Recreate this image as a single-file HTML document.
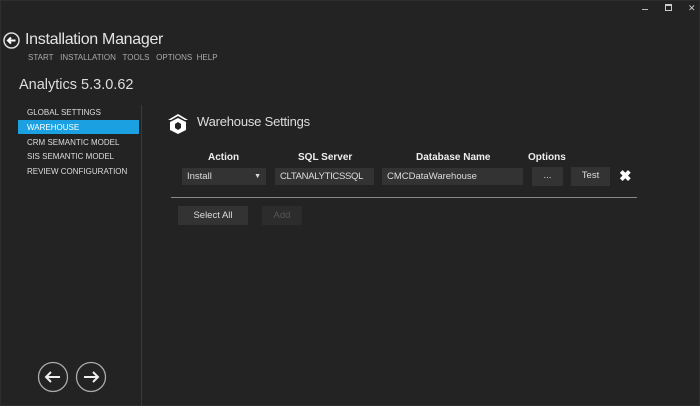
<!DOCTYPE html>
<html><head><style>
body{margin:0;width:700px;height:406px;background:#232323;font-family:"Liberation Sans",sans-serif;color:#e8e8e8;position:relative;overflow:hidden}
.a{position:absolute}
.f{position:absolute;background:#333;color:#ddd;font-size:9.5px;line-height:18px;padding-left:5px;box-sizing:border-box;white-space:nowrap}
.h{position:absolute;font-size:10px;font-weight:bold;color:#eee}
.m{font-size:8px;color:#aaa}
.s{position:absolute;left:27px;font-size:8px;color:#ddd}
</style></head><body>
<div class="a" style="left:0;top:0;width:698px;height:404px;border:1px solid #2e2e2e"></div>
<div class="a" style="left:642px;top:9px;width:6px;height:1px;background:#bbb"></div>
<div class="a" style="left:665px;top:4px;width:5px;height:4px;border:1px solid #ccc;border-top-width:2px"></div>
<div class="a" style="left:688px;top:3px;font-size:9px;color:#ccc">✕</div>
<svg class="a" style="left:3px;top:32px" width="17" height="17"><circle cx="8.5" cy="8.5" r="7.5" fill="none" stroke="#ddd" stroke-width="1.5"/><path d="M12.5 8.5H5M8 5.5L5 8.5L8 11.5" fill="none" stroke="#fff" stroke-width="2"/></svg>
<div class="a" style="left:25px;top:31px;font-size:16px;letter-spacing:-0.3px;color:#e4e4e4">Installation Manager</div>
<div class="a m" style="left:28px;top:53px">START&nbsp;&nbsp;&nbsp;INSTALLATION&nbsp;&nbsp;&nbsp;TOOLS&nbsp;&nbsp;&nbsp;OPTIONS&nbsp;&nbsp;HELP</div>
<div class="a" style="left:19px;top:77px;font-size:14.5px;color:#ddd">Analytics 5.3.0.62</div>
<div class="a" style="left:141px;top:105px;width:1px;height:301px;background:#3a3a3a"></div>
<div class="s" style="top:108px">GLOBAL SETTINGS</div>
<div class="a" style="left:18px;top:120px;width:121px;height:14px;background:#1ba1e2"></div>
<div class="s" style="top:123px;color:#fff">WAREHOUSE</div>
<div class="s" style="top:138px">CRM SEMANTIC MODEL</div>
<div class="s" style="top:152px">SIS SEMANTIC MODEL</div>
<div class="s" style="top:167px">REVIEW CONFIGURATION</div>
<svg class="a" style="left:166px;top:111px" width="24" height="24"><path d="M2 9L12 3L22 9L19 9L12 5L5 9Z" fill="#fff"/><path d="M4 11L12 7L20 11V19L12 23L4 19Z" fill="#fff"/><path d="M9 13L12 11L15 13V17L12 19L9 17Z" fill="#232323"/></svg>
<div class="a" style="left:197px;top:114px;font-size:13px;letter-spacing:-0.2px;color:#ddd">Warehouse Settings</div>
<div class="h" style="left:208px;top:152px">Action</div>
<div class="h" style="left:298px;top:152px">SQL Server</div>
<div class="h" style="left:416px;top:152px">Database Name</div>
<div class="h" style="left:528px;top:152px">Options</div>
<div class="f" style="left:182px;top:168px;width:84px;height:17px">Install<span style="position:absolute;right:5px;font-size:7px">▼</span></div>
<div class="f" style="left:275px;top:168px;width:99px;height:17px;letter-spacing:-0.3px">CLTANALYTICSSQL</div>
<div class="f" style="left:382px;top:168px;width:141px;height:17px">CMCDataWarehouse</div>
<div class="f" style="left:532px;top:167px;width:31px;height:19px;padding:0;text-align:center">...</div>
<div class="f" style="left:571px;top:167px;width:39px;height:19px;padding:0;text-align:center">Test</div>
<div class="a" style="left:619px;top:167px;font-size:15px;font-weight:bold;color:#fff">✖</div>
<div class="a" style="left:171px;top:197px;width:466px;height:1px;background:#888"></div>
<div class="f" style="left:178px;top:206px;width:70px;height:19px;padding:0;text-align:center;line-height:19px">Select All</div>
<div class="f" style="left:262px;top:206px;width:40px;height:19px;padding:0;text-align:center;line-height:19px;background:#2c2c2c;color:#555">Add</div>
<svg class="a" style="left:37px;top:361px" width="72" height="32"><circle cx="16" cy="16" r="14.5" fill="none" stroke="#aaa" stroke-width="1.3"/><circle cx="54" cy="16" r="14.5" fill="none" stroke="#aaa" stroke-width="1.3"/><path d="M23 16H9M14 11L9 16L14 21" fill="none" stroke="#eee" stroke-width="2"/><path d="M47 16H61M56 11L61 16L56 21" fill="none" stroke="#eee" stroke-width="2"/></svg>
</body></html>
